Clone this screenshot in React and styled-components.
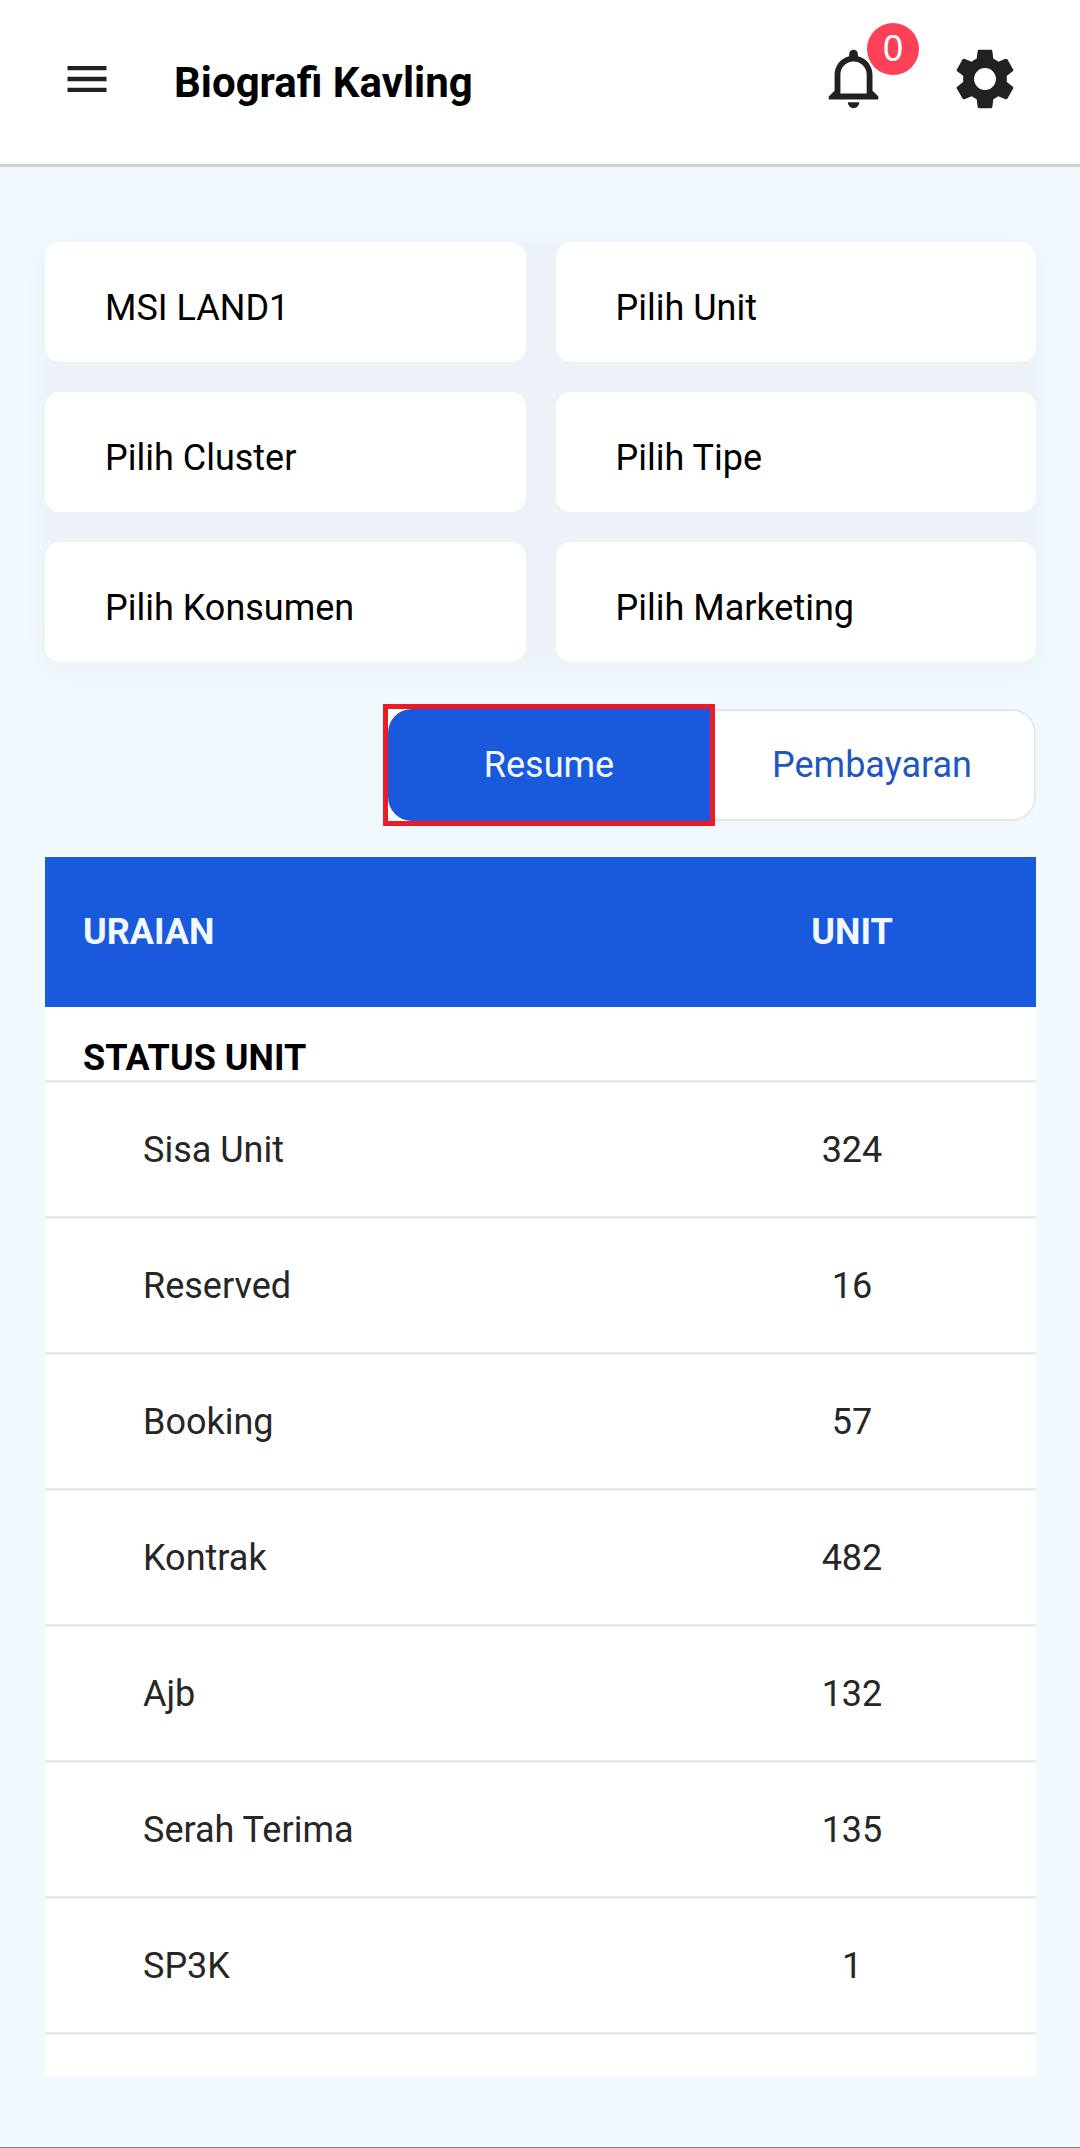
import React, { useState } from 'react';
import styled, { createGlobalStyle, css } from 'styled-components';

const GlobalStyle = createGlobalStyle`
  *, *::before, *::after { box-sizing: border-box; }
  body {
    margin: 0;
    background: #f1f9ff;
    color: #000;
    font-family: Roboto, "Liberation Sans", sans-serif;
    font-size: 36px;
    line-height: 42px;
  }
`;

const Page = styled.div`
  display: flex;
  flex-direction: column;
  min-height: 100vh;
  border-bottom: 1px solid #7c848c;
`;

const Header = styled.header`
  display: flex;
  align-items: center;
  height: 167px;
  padding: 0 60px 0 61px;
  background: #fff;
  border-bottom: 3px solid #cfd0d2;
`;

const IconButton = styled.button`
  display: flex;
  position: relative;
  padding: 0;
  border: 0;
  background: none;
  color: #212121;
  cursor: pointer;
`;

const Glyph = styled.svg`
  display: block;
  width: ${(p) => p.$size}px;
  height: ${(p) => p.$size}px;
  fill: currentColor;
`;

const Title = styled.h1`
  flex: 1;
  margin: 0;
  padding: 2px 0 0 61px;
  font-size: 42px;
  font-weight: 700;
  line-height: 50px;
`;

const Actions = styled.div`
  display: flex;
  gap: 60px;
  padding-bottom: 6px;
`;

const MenuSlot = styled.div`
  padding-bottom: 6px;
`;

const Badge = styled.span`
  position: absolute;
  top: -21px;
  right: -29px;
  width: 52px;
  height: 52px;
  border-radius: 50%;
  background: #ff4158;
  color: #fff;
  font-size: 36px;
  line-height: 52px;
  text-align: center;
`;

const Main = styled.main`
  display: flex;
  flex-direction: column;
  padding: 75px 44px 71px 45px;
`;

const Filters = styled.form`
  display: grid;
  grid-template-columns: 1fr 1fr;
  gap: 30px;
  border-radius: 15px;
  background: #edf2f9;
  box-shadow: 0 8px 24px 8px #edf2f9;
`;

const Filter = styled.select`
  appearance: none;
  width: 100%;
  height: 120px;
  padding: 12px 60px 0;
  border: 0;
  border-radius: 15px;
  background: #fff;
  color: #000;
  font: inherit;
`;

const Tabs = styled.div`
  display: flex;
  align-self: flex-end;
  margin: 47px 0 36px;
  background: #fff;
  border-radius: 0 24px 24px 0;
`;

const Tab = styled.button`
  position: relative;
  width: 326px;
  height: 112px;
  padding: 0;
  border: 2px solid #e4e8ed;
  border-left: 0;
  border-radius: 0 24px 24px 0;
  background: #fff;
  color: #1f57bd;
  font: inherit;
  cursor: pointer;

  ${(p) =>
    p.$first &&
    css`
      width: 322px;
      border: 0;
      border-radius: 24px 0 0 24px;
    `}

  ${(p) =>
    p.$active &&
    css`
      z-index: 1;
      background: #1959dc;
      color: #f1f9ff;

      &::after {
        content: '';
        position: absolute;
        inset: -5px;
        border: 5px solid #e91c27;
      }
    `}
`;

const TableCard = styled.section`
  padding-bottom: 41px;
  background: #fff;
`;

const Table = styled.table`
  width: 100%;
  table-layout: fixed;
  border-spacing: 0;
`;

const UnitColumn = styled.col`
  width: 368px;
`;

const HeadCell = styled.th`
  height: 150px;
  padding: ${(p) => (p.$center ? '0' : '0 38px')};
  background: #1959dc;
  color: #f1f9ff;
  font-weight: 700;
  text-align: ${(p) => (p.$center ? 'center' : 'left')};
`;

const GroupCell = styled.th`
  padding: 30px 38px 1px;
  border-bottom: 3px solid #e6eaef;
  font-weight: 700;
  text-align: left;
`;

const Cell = styled.td`
  height: 136px;
  padding: ${(p) => (p.$center ? '0' : '0 98px')};
  border-bottom: 3px solid #e6eaef;
  color: #262626;
  text-align: ${(p) => (p.$center ? 'center' : 'left')};
`;

const filters = [
  ['Perusahaan', 'MSI LAND1'],
  ['Unit', 'Pilih Unit'],
  ['Cluster', 'Pilih Cluster'],
  ['Tipe', 'Pilih Tipe'],
  ['Konsumen', 'Pilih Konsumen'],
  ['Marketing', 'Pilih Marketing'],
];

const tabs = ['Resume', 'Pembayaran'];

const rows = [
  ['Sisa Unit', 324],
  ['Reserved', 16],
  ['Booking', 57],
  ['Kontrak', 482],
  ['Ajb', 132],
  ['Serah Terima', 135],
  ['SP3K', 1],
];

const MENU = 'M3 18h18v-2H3v2zm0-5h18v-2H3v2zm0-7v2h18V6H3z';
const BELL =
  'M16 17H7V10.5C7 8 9 6 11.5 6C14 6 16 8 16 10.5M18 16V10.5C18 7.43 15.86 4.86 13 4.18V3.5A1.5 1.5 0 0 0 11.5 2A1.5 1.5 0 0 0 10 3.5V4.18C7.13 4.86 5 7.43 5 10.5V16L3 18V19H20V18M11.5 22A2 2 0 0 0 13.5 20H9.5A2 2 0 0 0 11.5 22Z';
const COG =
  'M12 15.75A3.75 3.75 0 0 1 8.25 12A3.75 3.75 0 0 1 12 8.25A3.75 3.75 0 0 1 15.75 12A3.75 3.75 0 0 1 12 15.75M19.43 12.97C19.47 12.65 19.5 12.33 19.5 12C19.5 11.67 19.47 11.34 19.43 11L21.54 9.37C21.73 9.22 21.78 8.95 21.66 8.73L19.66 5.27C19.54 5.05 19.27 4.96 19.05 5.05L16.56 6.05C16.04 5.66 15.5 5.32 14.87 5.07L14.5 2.42C14.46 2.18 14.25 2 14 2H10C9.75 2 9.54 2.18 9.5 2.42L9.13 5.07C8.5 5.32 7.96 5.66 7.44 6.05L4.95 5.05C4.73 4.96 4.46 5.05 4.34 5.27L2.34 8.73C2.21 8.95 2.27 9.22 2.46 9.37L4.57 11C4.53 11.34 4.5 11.67 4.5 12C4.5 12.33 4.53 12.65 4.57 12.97L2.46 14.63C2.27 14.78 2.21 15.05 2.34 15.27L4.34 18.73C4.46 18.95 4.73 19.03 4.95 18.95L7.44 17.94C7.96 18.34 8.5 18.68 9.13 18.93L9.5 21.58C9.54 21.82 9.75 22 10 22H14C14.25 22 14.46 21.82 14.5 21.58L14.87 18.93C15.5 18.67 16.04 18.34 16.56 17.94L19.05 18.95C19.27 19.03 19.54 18.95 19.66 18.73L21.66 15.27C21.78 15.05 21.73 14.78 21.54 14.63L19.43 12.97Z';

function Icon({ path, size }) {
  return (
    <Glyph viewBox="0 0 24 24" $size={size} aria-hidden="true">
      <path d={path} fillRule="evenodd" />
    </Glyph>
  );
}

export default function App() {
  const [active, setActive] = useState('Resume');

  return (
    <Page>
      <GlobalStyle />
      <Header>
        <MenuSlot>
          <IconButton aria-label="Menu">
            <Icon path={MENU} size={52} />
          </IconButton>
        </MenuSlot>
        <Title>Biografi Kavling</Title>
        <Actions>
          <IconButton aria-label="Notifikasi">
            <Icon path={BELL} size={70} />
            <Badge>0</Badge>
          </IconButton>
          <IconButton aria-label="Pengaturan">
            <Icon path={COG} size={70} />
          </IconButton>
        </Actions>
      </Header>
      <Main>
        <Filters>
          {filters.map(([label, value]) => (
            <Filter key={label} aria-label={label}>
              <option>{value}</option>
            </Filter>
          ))}
        </Filters>
        <Tabs role="tablist">
          {tabs.map((tab, i) => (
            <Tab
              key={tab}
              type="button"
              role="tab"
              aria-selected={active === tab}
              $first={i === 0}
              $active={active === tab}
              onClick={() => setActive(tab)}
            >
              {tab}
            </Tab>
          ))}
        </Tabs>
        <TableCard>
          <Table>
            <colgroup>
              <col />
              <UnitColumn />
            </colgroup>
            <thead>
              <tr>
                <HeadCell scope="col">URAIAN</HeadCell>
                <HeadCell scope="col" $center>UNIT</HeadCell>
              </tr>
            </thead>
            <tbody>
              <tr>
                <GroupCell colSpan={2} scope="colgroup">STATUS UNIT</GroupCell>
              </tr>
              {rows.map(([name, count]) => (
                <tr key={name}>
                  <Cell>{name}</Cell>
                  <Cell $center>{count}</Cell>
                </tr>
              ))}
            </tbody>
          </Table>
        </TableCard>
      </Main>
    </Page>
  );
}
